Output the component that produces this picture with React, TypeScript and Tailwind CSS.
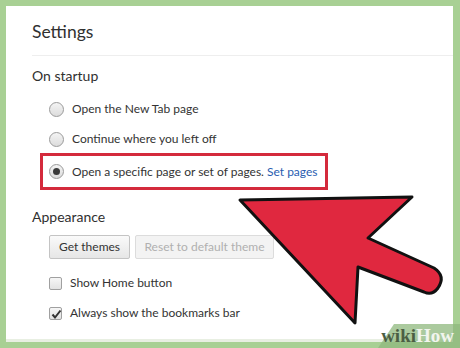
import React from 'react';

const font = { fontFamily: 'Lato, "Noto Sans", sans-serif' };

function Radio({ checked, label, link }: { checked?: boolean; label: string; link?: string }) {
  return (
    <div className="flex items-center gap-[8px] h-[20px] whitespace-nowrap">
      <span className="w-[15px] h-[15px] rounded-full border border-[#9a9a9a] bg-gradient-to-b from-[#f4f4f4] to-[#dcdcdc] flex items-center justify-center">
        {checked && <span className="w-[7px] h-[7px] rounded-full bg-[#3a3a3a]" />}
      </span>
      <span className="text-[12px] text-[#333]">
        {label}
        {link && <span className="text-[#2a5db0]"> {link}</span>}
      </span>
    </div>
  );
}

function Check({ checked, label }: { checked?: boolean; label: string }) {
  return (
    <div className="flex items-center gap-[8px] h-[20px] whitespace-nowrap">
      <span className="w-[13px] h-[13px] border border-[#a0a0a0] rounded-[2px] bg-gradient-to-b from-[#f6f6f6] to-[#e2e2e2] relative">
        {checked && (
          <svg viewBox="0 0 13 13" className="absolute inset-0 w-[13px] h-[13px]">
            <path d="M2.5 6.5 L5 9.5 L10.5 2.5" fill="none" stroke="#333" strokeWidth="2" />
          </svg>
        )}
      </span>
      <span className="text-[12px] text-[#333]">{label}</span>
    </div>
  );
}

export default function App() {
  return (
    <div className="w-[460px] h-[348px] bg-[#a8d094] pt-[6px] pl-[6px] overflow-hidden relative" style={font}>
      <div className="w-[447px] h-[336px] bg-white border-b-[3px] border-[#e8efe2] relative">
        <div className="pl-[26px] pt-[13px]">
          <h1 className="text-[17.5px] text-[#303030] leading-[26px]">Settings</h1>
          <div className="h-px bg-[#eeeeee] mt-[10px]" />
          <h2 className="text-[14px] text-[#303030] mt-[10px] leading-[20px]">On startup</h2>
          <div className="pl-[17px] mt-[13px] flex flex-col gap-[10px]">
            <Radio label="Open the New Tab page" />
            <Radio label="Continue where you left off" />
          </div>
          <div className="ml-[8px] mt-[4px] w-[288px] h-[37px] border-[3px] border-[#d42a3c] pl-[6px] flex items-center">
            <Radio checked label="Open a specific page or set of pages." link="Set pages" />
          </div>
          <h2 className="text-[14px] text-[#303030] mt-[17px] leading-[20px]">Appearance</h2>
          <div className="pl-[17px] mt-[8px] flex gap-[5px]">
            <button className="h-[24px] w-[81px] border border-[#c4c4c4] rounded-[2px] bg-gradient-to-b from-[#fafafa] to-[#e6e6e6] text-[12px] text-[#333]">Get themes</button>
            <button className="h-[24px] w-[139px] border border-[#dcdcdc] rounded-[2px] bg-[#f3f3f3] text-[12px] text-[#b0b0b0]">Reset to default theme</button>
          </div>
          <div className="pl-[17px] mt-[14px] flex flex-col gap-[10px]">
            <Check label="Show Home button" />
            <Check checked label="Always show the bookmarks bar" />
          </div>
        </div>
      </div>
      <svg className="absolute left-0 top-0" width="460" height="348" viewBox="0 0 460 348">
        <path
          d="M240 200 L412 197 L368 238 L434 268 Q446 276 438 288 Q432 296 424 292 L358 267 L355 323 Z"
          fill="#e0283f"
          stroke="#111"
          strokeWidth="3"
          strokeLinejoin="round"
        />
        <path d="M378 348 L394 324 L460 324 L460 348 Z" fill="#8fb87d" opacity="0.75" />
      </svg>
      <div className="absolute right-[6px] bottom-[3px] text-[19px] font-bold leading-none" style={{ fontFamily: '"Liberation Serif", serif' }}>
        <span className="text-[#4b5e43]">wiki</span>
        <span className="text-[#f2f5ee]">How</span>
      </div>
    </div>
  );
}
